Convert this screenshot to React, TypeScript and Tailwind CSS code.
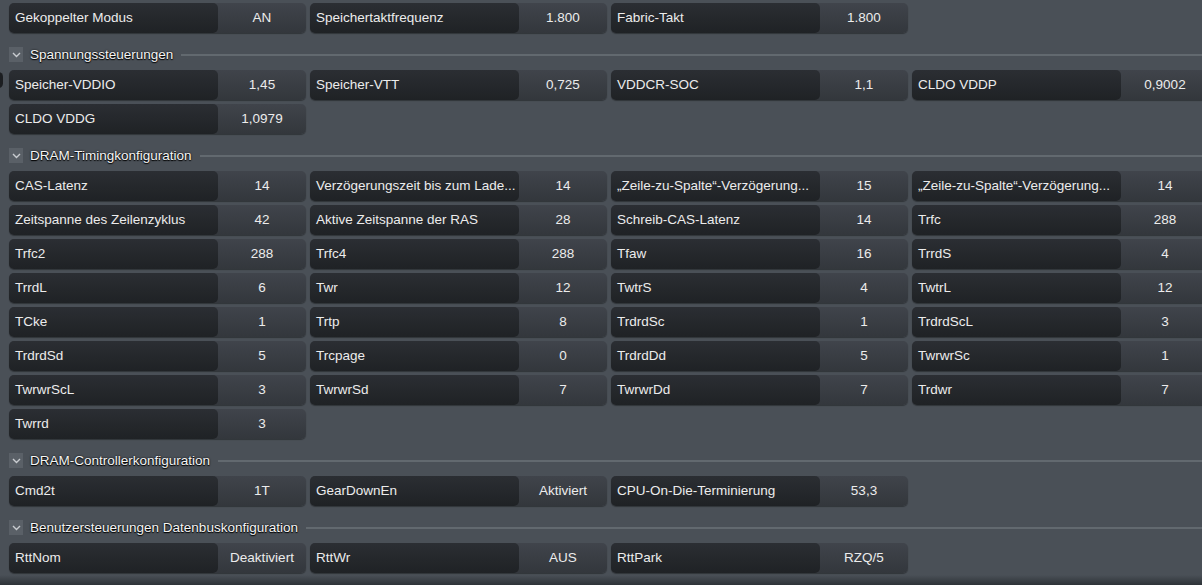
type Item = [string, string];

const top: Item[] = [
  ["Gekoppelter Modus", "AN"],
  ["Speichertaktfrequenz", "1.800"],
  ["Fabric-Takt", "1.800"],
];

const sections: { title: string; items: Item[] }[] = [
  {
    title: "Spannungssteuerungen",
    items: [
      ["Speicher-VDDIO", "1,45"],
      ["Speicher-VTT", "0,725"],
      ["VDDCR-SOC", "1,1"],
      ["CLDO VDDP", "0,9002"],
      ["CLDO VDDG", "1,0979"],
    ],
  },
  {
    title: "DRAM-Timingkonfiguration",
    items: [
      ["CAS-Latenz", "14"],
      ["Verzögerungszeit bis zum Lade...", "14"],
      ["\u201EZeile-zu-Spalte\u201C-Verzögerung...", "15"],
      ["\u201EZeile-zu-Spalte\u201C-Verzögerung...", "14"],
      ["Zeitspanne des Zeilenzyklus", "42"],
      ["Aktive Zeitspanne der RAS", "28"],
      ["Schreib-CAS-Latenz", "14"],
      ["Trfc", "288"],
      ["Trfc2", "288"],
      ["Trfc4", "288"],
      ["Tfaw", "16"],
      ["TrrdS", "4"],
      ["TrrdL", "6"],
      ["Twr", "12"],
      ["TwtrS", "4"],
      ["TwtrL", "12"],
      ["TCke", "1"],
      ["Trtp", "8"],
      ["TrdrdSc", "1"],
      ["TrdrdScL", "3"],
      ["TrdrdSd", "5"],
      ["Trcpage", "0"],
      ["TrdrdDd", "5"],
      ["TwrwrSc", "1"],
      ["TwrwrScL", "3"],
      ["TwrwrSd", "7"],
      ["TwrwrDd", "7"],
      ["Trdwr", "7"],
      ["Twrrd", "3"],
    ],
  },
  {
    title: "DRAM-Controllerkonfiguration",
    items: [
      ["Cmd2t", "1T"],
      ["GearDownEn", "Aktiviert"],
      ["CPU-On-Die-Terminierung", "53,3"],
    ],
  },
  {
    title: "Benutzersteuerungen Datenbuskonfiguration",
    items: [
      ["RttNom", "Deaktiviert"],
      ["RttWr", "AUS"],
      ["RttPark", "RZQ/5"],
    ],
  },
];

function Cell({ label, value }: { label: string; value: string }) {
  return (
    <div className="flex h-[30px] rounded-[5px] bg-gradient-to-b from-[#40444b] to-[#33373c] pt-[1px] shadow-[0_1px_1px_rgba(0,0,0,0.35)]">
      <div className="-mt-[1px] flex w-[209px] items-center overflow-hidden whitespace-nowrap rounded-[5px] bg-gradient-to-b from-[#2b2e33] to-[#1f2225] pl-[6px] pt-[1px] text-[#ececec]">
        {label}
      </div>
      <div className="flex flex-1 items-center justify-center text-[#ececec]">{value}</div>
    </div>
  );
}

function Grid({ items }: { items: Item[] }) {
  return (
    <div className="grid grid-cols-[repeat(4,297px)] gap-[4px]">
      {items.map(([l, v], i) => (
        <Cell key={i} label={l} value={v} />
      ))}
    </div>
  );
}

function Header({ title }: { title: string }) {
  return (
    <div className="flex h-[37px] items-end pb-[8px]">
      <div className="flex h-[15px] w-[14px] shrink-0 items-center justify-center bg-[#5a6067]">
        <svg width="9" height="6" viewBox="0 0 9 6">
          <path d="M1 1 L4.5 4.5 L8 1" fill="none" stroke="#c9ccd0" strokeWidth="1.4" />
        </svg>
      </div>
      <div className="ml-[7px] whitespace-nowrap text-[13.5px] leading-[15px] text-[#f5f5f5] [text-shadow:0_0_2px_#000,0_1px_1px_#000]">
        {title}
      </div>
      <div className="mb-[6px] ml-[8px] h-[2px] flex-1 bg-[#62696f]" />
    </div>
  );
}

export default function App() {
  return (
    <div
      className="relative h-[585px] w-[1202px] overflow-hidden bg-[#4a5057] text-[13.5px]"
      style={{ fontFamily: '"Liberation Sans", Arial, sans-serif' }}
    >
      <div className="absolute left-[-6px] top-[72px] h-[16px] w-[9px] rounded-full bg-[#1c1e21]" />
      <div className="absolute bottom-0 left-0 right-0 h-[10px] bg-gradient-to-b from-[#4a5057] to-[#2e3338]" />
      <div className="relative pl-[9px] pt-[3px]">
        <Grid items={top} />
        {sections.map((s) => (
          <div key={s.title}>
            <Header title={s.title} />
            <Grid items={s.items} />
          </div>
        ))}
      </div>
    </div>
  );
}
